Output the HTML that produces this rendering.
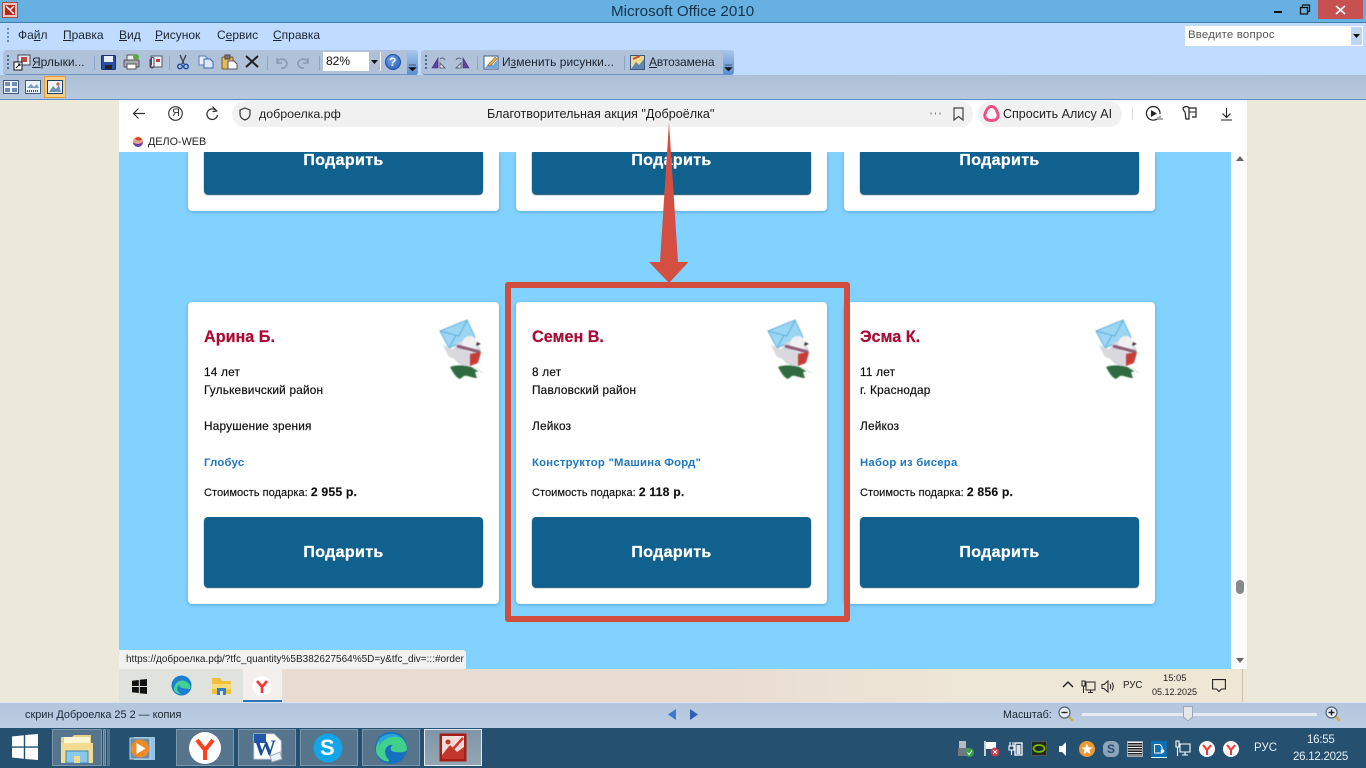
<!DOCTYPE html>
<html lang="ru"><head><meta charset="utf-8"><title>Microsoft Office 2010</title>
<style>
html,body{margin:0;padding:0;width:1366px;height:768px;overflow:hidden;background:#ece8da;font-family:"Liberation Sans",sans-serif;color:#111}
.a{position:absolute}
.t{position:absolute;white-space:nowrap;line-height:1}
svg{position:absolute;overflow:visible}
u{text-decoration-thickness:1px;text-underline-offset:1px}
.m{font-size:12px;top:29px;color:#1c2430}
.card{position:absolute;width:311px;background:#fff;border-radius:4px;box-shadow:0 1px 3px rgba(40,110,160,.45)}
.btn{position:absolute;left:16px;width:279px;background:#10618e;border-radius:4px;box-shadow:0 1px 1px #0b4a6e;color:#fff;font-weight:bold;font-size:16px;letter-spacing:.35px;text-align:center;-webkit-text-stroke:.3px #fff}
.nm{position:absolute;left:16px;top:27px;font-size:16.2px;font-weight:bold;color:#a80b33;white-space:nowrap;line-height:1;-webkit-text-stroke:.2px #a80b33}
.c{position:absolute;left:16px;font-size:11.8px;color:#111;white-space:nowrap;line-height:1;letter-spacing:.2px;-webkit-text-stroke:.2px #111}
.g{position:absolute;left:16px;top:156px;font-size:11.3px;font-weight:bold;color:#1e78bf;white-space:nowrap;line-height:1;letter-spacing:.25px}
.p{position:absolute;left:16px;top:184px;font-size:11.1px;color:#111;white-space:nowrap;line-height:1;-webkit-text-stroke:.15px #111}
.p b{font-size:12.2px;letter-spacing:.2px}
.bird{left:252px;top:17px;filter:blur(.45px)}
.tb{position:absolute;top:729px;height:37px;background:#56748c;border:1px solid #7d97aa;box-sizing:border-box}
</style></head><body>

<!-- title bar -->
<div class="a" style="left:0;top:0;width:1366px;height:22px;background:#66b1e1"></div>
<div class="a" style="left:0;top:22px;width:1366px;height:1px;background:#3f7ea9"></div>
<div class="a" style="left:2px;top:2px;width:16px;height:16px;background:#e9c6bd;border:1px solid #b24b3a;box-sizing:border-box"></div>
<div class="a" style="left:5px;top:5px;width:10px;height:10px;background:#b3271c"></div>
<svg style="left:5px;top:5px" width="10" height="10"><path d="M1 1L9 9M9 1L5 5" stroke="#fff" stroke-width="1.5" fill="none"/></svg>
<div class="t" style="left:611px;top:4px;font-size:15.2px;color:#17324a">Microsoft Office 2010</div>
<div class="a" style="left:1274px;top:11px;width:8px;height:2px;background:#111"></div>
<svg style="left:1299px;top:4px" width="12" height="11"><path d="M1.5 3.5H8.5V10H1.5ZM3.5 3V1H10.5V7.5H9" stroke="#111" stroke-width="1.3" fill="none"/></svg>
<div class="a" style="left:1318px;top:0;width:45px;height:19px;background:#c75150"></div>
<svg style="left:1335px;top:5px" width="11" height="10"><path d="M1 1L10 9M10 1L1 9" stroke="#fff" stroke-width="1.6" fill="none"/></svg>

<!-- menu band -->
<div class="a" style="left:0;top:23px;width:1366px;height:52px;background:#bfdbff"></div>
<div class="a" style="left:7px;top:28px;width:2px;height:15px;background-image:repeating-linear-gradient(#5f8fc5 0 2px,transparent 2px 4px)"></div>
<div class="t m" style="left:18px"><span>Фа<u>й</u>л</span></div>
<div class="t m" style="left:63px"><u>П</u>равка</div>
<div class="t m" style="left:119px"><u>В</u>ид</div>
<div class="t m" style="left:155px"><u>Р</u>исунок</div>
<div class="t m" style="left:217px">С<u>е</u>рвис</div>
<div class="t m" style="left:273px"><u>С</u>правка</div>
<div class="a" style="left:1185px;top:26px;width:178px;height:20px;background:#fff"></div>
<div class="t" style="left:1188px;top:30px;font-size:11.4px;color:#555;letter-spacing:.2px">Введите вопрос</div>
<div class="a" style="left:1351px;top:27px;width:11px;height:18px;background:#bdd6f6"></div>
<svg style="left:1353px;top:34px" width="7" height="4"><path d="M0 0H7L3.5 4Z" fill="#111"/></svg>

<!-- standard toolbar -->
<div class="a" style="left:3px;top:50px;width:414px;height:25px;background:#afc2da;border-radius:4px 0 0 4px;border-bottom:1px solid #6e94c4;box-sizing:border-box"></div>
<div class="a" style="left:407px;top:50px;width:11px;height:25px;background:linear-gradient(#a9c6ec,#5a8dd0);border-radius:0 3px 3px 0"></div>
<svg style="left:409px;top:65px" width="7" height="6"><path d="M0 0H7M0 2.5H7L3.5 6Z" fill="#111" stroke="#111" stroke-width=".6"/></svg>
<div class="a" style="left:421px;top:50px;width:303px;height:25px;background:#afc2da;border-radius:4px 0 0 4px;border-bottom:1px solid #6e94c4;box-sizing:border-box"></div>
<div class="a" style="left:723px;top:50px;width:11px;height:25px;background:linear-gradient(#a9c6ec,#5a8dd0);border-radius:0 3px 3px 0"></div>
<svg style="left:725px;top:65px" width="7" height="6"><path d="M0 0H7M0 2.5H7L3.5 6Z" fill="#111" stroke="#111" stroke-width=".6"/></svg>
<div class="a" style="left:7px;top:55px;width:2px;height:15px;background-image:repeating-linear-gradient(#3f6ea5 0 2px,transparent 2px 4px)"></div>
<div class="a" style="left:425px;top:55px;width:2px;height:15px;background-image:repeating-linear-gradient(#3f6ea5 0 2px,transparent 2px 4px)"></div>
<svg style="left:13px;top:54px" width="18" height="17"><rect x="5" y="1" width="12" height="10" fill="#e4ecf6" stroke="#445"/><rect x="8" y="3" width="6" height="5" fill="#c0473a"/><rect x="1" y="8" width="8" height="8" fill="#fff" stroke="#111"/><path d="M3 14L7 10M5 10H7V12" stroke="#111" fill="none"/></svg>
<div class="t" style="left:32px;top:56px;font-size:12px;color:#1c2430"><u>Я</u>рлыки...</div>
<div class="a" style="left:94px;top:56px;width:1px;height:14px;background:#8aa4c4"></div>
<svg style="left:101px;top:55px" width="15" height="15"><rect x=".5" y=".5" width="14" height="14" rx="1" fill="#2a4fa8" stroke="#1d2f66"/><rect x="3" y="1" width="9" height="6" fill="#e6eefb"/><rect x="4" y="10" width="7" height="4" fill="#222"/></svg>
<svg style="left:123px;top:54px" width="17" height="16"><rect x="4" y="1" width="9" height="5" fill="#eee" stroke="#555"/><rect x="1" y="6" width="15" height="7" rx="1" fill="#a5a8ad" stroke="#555"/><rect x="4" y="10" width="9" height="5" fill="#fff" stroke="#555"/><circle cx="13" cy="3" r="3" fill="#5aa648"/></svg>
<svg style="left:146px;top:54px" width="17" height="16"><rect x="5" y="2" width="11" height="11" fill="#eef2f8" stroke="#556"/><rect x="10" y="5" width="4" height="3" fill="#c23b3b"/><path d="M4 5V12A2 2 0 0 0 8 12V4A1.5 1.5 0 0 0 5.5 4V11" stroke="#445" fill="none"/></svg>
<div class="a" style="left:169px;top:56px;width:1px;height:14px;background:#8aa4c4"></div>
<svg style="left:176px;top:54px" width="14" height="16"><path d="M4 1L8 10M10 1L6 10" stroke="#445" stroke-width="1.4"/><circle cx="4" cy="12.5" r="2.3" fill="none" stroke="#1f4fa5" stroke-width="1.5"/><circle cx="10" cy="12.5" r="2.3" fill="none" stroke="#1f4fa5" stroke-width="1.5"/></svg>
<svg style="left:198px;top:55px" width="16" height="14"><path d="M1 1H7L9 3V10H1Z" fill="#e8eefa" stroke="#5a7fb8"/><path d="M6 4H12L15 7V13H6Z" fill="#dbe6f8" stroke="#3a68ab"/></svg>
<svg style="left:221px;top:54px" width="17" height="16"><rect x="1" y="3" width="11" height="12" rx="1" fill="#e3b95a" stroke="#7c5a1e"/><rect x="4" y="1" width="5" height="4" fill="#777" stroke="#444"/><path d="M7 7H13L16 10V15H7Z" fill="#fff" stroke="#556"/></svg>
<svg style="left:245px;top:55px" width="14" height="13"><path d="M1 1L13 12M13 1L1 12" stroke="#222" stroke-width="2"/></svg>
<div class="a" style="left:267px;top:56px;width:1px;height:14px;background:#8aa4c4"></div>
<svg style="left:274px;top:56px" width="14" height="13"><path d="M3 2V7H8M3 7A5 4.5 0 1 1 7 12" stroke="#8b9bb0" stroke-width="1.6" fill="none"/></svg>
<svg style="left:297px;top:56px" width="14" height="13"><path d="M11 2V7H6M11 7A5 4.5 0 1 0 7 12" stroke="#8b9bb0" stroke-width="1.6" fill="none"/></svg>
<div class="a" style="left:319px;top:56px;width:1px;height:14px;background:#8aa4c4"></div>
<div class="a" style="left:323px;top:52px;width:58px;height:19px;background:#fff"></div>
<div class="a" style="left:369px;top:52px;width:11px;height:19px;background:#aebfd6"></div>
<svg style="left:371px;top:60px" width="7" height="4"><path d="M0 0H7L3.5 4Z" fill="#111"/></svg>
<div class="t" style="left:326px;top:55px;font-size:12px;color:#111">82%</div>
<div class="a" style="left:385px;top:54px;width:16px;height:16px;border-radius:50%;background:radial-gradient(circle at 40% 35%,#6fa5ea,#2257b8);border:1px solid #1e4b9c;box-sizing:border-box"></div>
<div class="t" style="left:389px;top:56px;font-size:12px;font-weight:bold;color:#fff">?</div>
<svg style="left:431px;top:55px" width="16" height="14"><path d="M1 13L7 3V13Z" fill="#6a3fa0" stroke="#3f2a70" stroke-width=".6"/><path d="M9 13V8L14 13Z" fill="#e6ecf6" stroke="#667"/><path d="M9 4A3 3 0 0 1 14 5" stroke="#667" fill="none"/></svg>
<svg style="left:454px;top:55px" width="16" height="14"><path d="M15 13L9 3V13Z" fill="#6a3fa0" stroke="#3f2a70" stroke-width=".6"/><path d="M7 13V8L2 13Z" fill="#e6ecf6" stroke="#667"/><path d="M7 4A3 3 0 0 0 2 5" stroke="#667" fill="none"/></svg>
<div class="a" style="left:477px;top:56px;width:1px;height:14px;background:#8aa4c4"></div>
<svg style="left:483px;top:54px" width="16" height="16"><rect x="1" y="2" width="14" height="13" fill="#fff" stroke="#3a5a85"/><path d="M2 14L7 8L10 11L14 6V14Z" fill="#6ba7d8"/><path d="M5 11L12 3L14 5L7 12Z" fill="#e3a838" stroke="#7a5a1e" stroke-width=".5"/></svg>
<div class="t" style="left:502px;top:56px;font-size:12px;color:#1c2430;letter-spacing:.03px">И<u>з</u>менить рисунки...</div>
<div class="a" style="left:624px;top:56px;width:1px;height:14px;background:#8aa4c4"></div>
<svg style="left:630px;top:54px" width="15" height="16"><rect x=".5" y="1.5" width="14" height="14" fill="#f1d98a" stroke="#3a5a85"/><path d="M1 15L6 8L9 11L14 5V15Z" fill="#5f86ad"/><path d="M3 5L10 2" stroke="#c9493a" stroke-width="2"/></svg>
<div class="t" style="left:649px;top:56px;font-size:12px;color:#1c2430;letter-spacing:-.1px"><u>А</u>втозамена</div>

<!-- view bar -->
<div class="a" style="left:0;top:75px;width:1366px;height:24px;background:linear-gradient(#acbfd6,#b8c9de)"></div>
<div class="a" style="left:0;top:99px;width:1366px;height:1px;background:#5f8fc8"></div>
<svg style="left:3px;top:80px" width="16" height="14"><rect x=".5" y=".5" width="15" height="13" fill="#eef3fa" stroke="#3d5a80"/><path d="M2 2H7V6H2ZM9 2H14V6H9ZM2 8H7V12H2ZM9 8H14V12H9Z" fill="#6e8db5"/></svg>
<svg style="left:25px;top:80px" width="16" height="14"><rect x=".5" y=".5" width="15" height="13" fill="#eef3fa" stroke="#3d5a80"/><path d="M2 8L6 4L9 7L12 4L14 8Z" fill="#7e9cc0"/><path d="M2 11H14" stroke="#443a99" stroke-dasharray="1 1" stroke-width="2"/></svg>
<div class="a" style="left:44px;top:76px;width:22px;height:22px;background:#f6cf84;border:1px solid #e59b37;box-sizing:border-box"></div>
<svg style="left:47px;top:80px" width="16" height="14"><rect x=".5" y=".5" width="15" height="13" fill="#eef3fa" stroke="#1e3d66"/><path d="M2 12L6 6L9 9L12 5L14 12Z" fill="#6d93ba"/><circle cx="11" cy="4" r="1.6" fill="#d2583c"/></svg>

<!-- browser page -->
<div class="a" style="left:119px;top:152px;width:1112px;height:517px;background:#82d2ff"></div>
<div class="a" style="left:1231px;top:152px;width:16px;height:517px;background:#fdfcfd"></div>
<svg style="left:1236px;top:156px" width="8" height="5"><path d="M0 5H8L4 0Z" fill="#666"/></svg>
<svg style="left:1236px;top:658px" width="8" height="5"><path d="M0 0H8L4 5Z" fill="#666"/></svg>
<div class="a" style="left:1236px;top:580px;width:8px;height:14px;border-radius:4px;background:#85888c"></div>

<!-- top cards -->
<div class="card" style="left:188px;top:152px;height:59px;border-radius:0 0 4px 4px"><div class="btn" style="top:0;height:42px;line-height:17px;border-radius:0 0 4px 4px">Подарить</div></div>
<div class="card" style="left:516px;top:152px;height:59px;border-radius:0 0 4px 4px"><div class="btn" style="top:0;height:42px;line-height:17px;border-radius:0 0 4px 4px">Подарить</div></div>
<div class="card" style="left:844px;top:152px;height:59px;border-radius:0 0 4px 4px"><div class="btn" style="top:0;height:42px;line-height:17px;border-radius:0 0 4px 4px">Подарить</div></div>

<!-- cards -->
<div class="card" style="left:188px;top:302px;height:302px">
 <div class="nm">Арина Б.</div><div class="c" style="top:65px">14 лет</div><div class="c" style="top:83px">Гулькевичский район</div><div class="c" style="top:119px">Нарушение зрения</div>
 <div class="g">Глобус</div><div class="p">Стоимость подарка: <b>2 955 р.</b></div>
 <svg class="bird" width="44" height="60" viewBox="0 0 44 60"><path d="M10 48C18 45 30 46 41 52L35 53L37 59C31 59 28 56 24 57L20 60C15 58 13 53 10 48Z" fill="#2f6a41"/><path d="M33 48L43 54" stroke="#e5efe6" stroke-width="2"/><path d="M0 12L27 1L35 18L9 29Z" fill="#9bd6f2" stroke="#66b3e0"/><path d="M0 12L19 17L27 1M9 29L16 16" fill="none" stroke="#62aedd"/><path d="M3 26L15 31L20 42L9 38Z" fill="#dadade"/><ellipse cx="27" cy="34" rx="14" ry="13" fill="#d8d8de"/><circle cx="30" cy="25" r="8" fill="#f0f0f2"/><path d="M37 23L41 25L36 27Z" fill="#333"/><path d="M17 27L40 33" stroke="#8f5d78" stroke-width="3"/><path d="M30 35L41 33L38 44L30 47Z" fill="#c83d38"/></svg>
 <div class="btn" style="top:215px;height:70px;line-height:72px">Подарить</div>
</div>
<div class="card" style="left:516px;top:302px;height:302px">
 <div class="nm">Семен В.</div><div class="c" style="top:65px">8 лет</div><div class="c" style="top:83px">Павловский район</div><div class="c" style="top:119px">Лейкоз</div>
 <div class="g">Конструктор "Машина Форд"</div><div class="p">Стоимость подарка: <b>2 118 р.</b></div>
 <svg class="bird" width="44" height="60" viewBox="0 0 44 60"><path d="M10 48C18 45 30 46 41 52L35 53L37 59C31 59 28 56 24 57L20 60C15 58 13 53 10 48Z" fill="#2f6a41"/><path d="M33 48L43 54" stroke="#e5efe6" stroke-width="2"/><path d="M0 12L27 1L35 18L9 29Z" fill="#9bd6f2" stroke="#66b3e0"/><path d="M0 12L19 17L27 1M9 29L16 16" fill="none" stroke="#62aedd"/><path d="M3 26L15 31L20 42L9 38Z" fill="#dadade"/><ellipse cx="27" cy="34" rx="14" ry="13" fill="#d8d8de"/><circle cx="30" cy="25" r="8" fill="#f0f0f2"/><path d="M37 23L41 25L36 27Z" fill="#333"/><path d="M17 27L40 33" stroke="#8f5d78" stroke-width="3"/><path d="M30 35L41 33L38 44L30 47Z" fill="#c83d38"/></svg>
 <div class="btn" style="top:215px;height:70px;line-height:72px">Подарить</div>
</div>
<div class="card" style="left:844px;top:302px;height:302px">
 <div class="nm">Эсма К.</div><div class="c" style="top:65px">11 лет</div><div class="c" style="top:83px">г. Краснодар</div><div class="c" style="top:119px">Лейкоз</div>
 <div class="g">Набор из бисера</div><div class="p">Стоимость подарка: <b>2 856 р.</b></div>
 <svg class="bird" width="44" height="60" viewBox="0 0 44 60"><path d="M10 48C18 45 30 46 41 52L35 53L37 59C31 59 28 56 24 57L20 60C15 58 13 53 10 48Z" fill="#2f6a41"/><path d="M33 48L43 54" stroke="#e5efe6" stroke-width="2"/><path d="M0 12L27 1L35 18L9 29Z" fill="#9bd6f2" stroke="#66b3e0"/><path d="M0 12L19 17L27 1M9 29L16 16" fill="none" stroke="#62aedd"/><path d="M3 26L15 31L20 42L9 38Z" fill="#dadade"/><ellipse cx="27" cy="34" rx="14" ry="13" fill="#d8d8de"/><circle cx="30" cy="25" r="8" fill="#f0f0f2"/><path d="M37 23L41 25L36 27Z" fill="#333"/><path d="M17 27L40 33" stroke="#8f5d78" stroke-width="3"/><path d="M30 35L41 33L38 44L30 47Z" fill="#c83d38"/></svg>
 <div class="btn" style="top:215px;height:70px;line-height:72px">Подарить</div>
</div>

<!-- browser chrome -->
<div class="a" style="left:119px;top:100px;width:1128px;height:52px;background:#fff"></div>
<div class="a" style="left:232px;top:101px;width:741px;height:26px;background:#f1f1f1;border-radius:13px"></div>
<div class="a" style="left:978px;top:101px;width:144px;height:26px;background:#f1f1f1;border-radius:13px"></div>
<svg style="left:132px;top:107px" width="14" height="13"><path d="M13 6.5H1.5M6.5 1.5L1.5 6.5L6.5 11.5" stroke="#333" stroke-width="1.2" fill="none"/></svg>
<svg style="left:168px;top:106px" width="15" height="15"><circle cx="7.5" cy="7.5" r="6.8" stroke="#333" stroke-width="1.1" fill="none"/></svg>
<div class="t" style="left:172px;top:108px;font-size:11px;color:#333">Я</div>
<svg style="left:205px;top:106px" width="14" height="15"><path d="M11.5 5A5.3 5.3 0 1 0 12.5 9" stroke="#333" stroke-width="1.3" fill="none"/><path d="M7.5 0.5L11.8 5L7.5 5.6" stroke="#333" stroke-width="1.2" fill="none"/></svg>
<svg style="left:239px;top:107px" width="12" height="14"><path d="M6 1L11 3V7C11 10 9 12 6 13C3 12 1 10 1 7V3Z" stroke="#333" stroke-width="1.2" fill="none"/></svg>
<div class="t" style="left:259px;top:108px;font-size:12.4px;color:#222">доброелка.рф</div>
<div class="t" style="left:487px;top:108px;font-size:12.6px;color:#222">Благотворительная акция "Доброёлка"</div>
<svg style="left:929px;top:112px" width="13" height="3"><path d="M1.5 1.5H2.5M6 1.5H7M10.5 1.5H11.5" stroke="#777" stroke-width="2"/></svg>
<svg style="left:953px;top:107px" width="11" height="14"><path d="M1 1H10V13L5.5 9.5L1 13Z" stroke="#444" stroke-width="1.2" fill="none"/></svg>
<svg style="left:983px;top:105px" width="17" height="17"><path d="M8.5 1.5C12 1.5 13.500 5 15 9C16 13 13 15.5 8.5 15.5C4 15.5 1 13 2 9C3.5 5 5 1.5 8.5 1.5Z" fill="#fff" stroke="#ee4f86" stroke-width="3"/></svg>
<div class="t" style="left:1003px;top:108px;font-size:12.5px;color:#222">Спросить Алису AI</div>
<div class="a" style="left:1132px;top:107px;width:1px;height:13px;background:#ddd"></div>
<svg style="left:1145px;top:105px" width="18" height="17"><path d="M12 14A6.8 6.8 0 1 1 15 9" stroke="#222" stroke-width="1.2" fill="none"/><path d="M6 5L12 8.5L6 12Z" fill="#222"/><path d="M13 12V15M15 10.5V15M17 13V15" stroke="#555"/></svg>
<svg style="left:1182px;top:105px" width="16" height="16"><path d="M1 3C3 1 6 1 7 3V14H4L3 7C2 6 1 5 1 3Z M7 3H14V12H10" stroke="#222" stroke-width="1.2" fill="none"/><path d="M7 7H14" stroke="#222"/></svg>
<svg style="left:1220px;top:107px" width="13" height="14"><path d="M6.5 1V10M2.5 6.5L6.5 10.5L10.5 6.5M1 13H12" stroke="#222" stroke-width="1.1" fill="none"/></svg>
<svg style="left:132px;top:135px" width="12" height="13"><circle cx="6" cy="6.5" r="5" fill="#e8a48f"/><path d="M1 7A5 5 0 0 0 11 7L8 8.5C6 9.5 3 9 1 7Z" fill="#6a3ea0"/><path d="M3 4C5 1 9 2 10 5L6 5.5Z" fill="#d3431f"/></svg>
<div class="t" style="left:148px;top:137px;font-size:10.8px;color:#222">ДЕЛО-WEB</div>

<!-- annotation -->
<svg style="left:0;top:0" width="1366" height="768"><path d="M669 122L678 262H688.5L669 283L649 262H660Z" fill="#d44f41"/></svg>
<div class="a" style="left:505px;top:282px;width:345px;height:340px;box-sizing:border-box;border:6px solid #d04d3f;border-radius:3px"></div>

<!-- status url + inner taskbar -->
<div class="a" style="left:119px;top:669px;width:1128px;height:34px;background:linear-gradient(90deg,#e8dbd2 0,#e8dbd2 50%,#eee6d6 75%,#efe6d6 100%)"></div>
<div class="a" style="left:119px;top:669px;width:124px;height:33px;background:#e0e2de"></div>
<div class="a" style="left:243px;top:669px;width:39px;height:33px;background:#f2efec"></div>
<div class="a" style="left:243px;top:700px;width:39px;height:2px;background:#2c73b8"></div>
<div class="a" style="left:119px;top:650px;width:347px;height:19px;background:#f1f1f1;border-radius:0 3px 0 0"></div>
<div class="t" style="left:126px;top:655px;font-size:10px;color:#222">https://доброелка.рф/?tfc_quantity%5B382627564%5D=y&amp;tfc_div=:::#order</div>
<svg style="left:132px;top:679px" width="15" height="15"><path d="M0 1.8L6.8 1V7H0ZM7.8 .8L15 0V7H7.8ZM0 8H6.8V14L0 13.2ZM7.8 8H15V15L7.8 14.2Z" fill="#111"/></svg>
<svg style="left:171px;top:675px" width="21" height="21"><circle cx="10.5" cy="10.5" r="10" fill="#1b7fd0"/><path d="M3 14C3 8 9 4 14 6C19 8 20 12 19 14C16 14 7 13 9 10C5 11 5 16 10 19C6 19 3 17 3 14Z" fill="#45d196"/></svg>
<svg style="left:212px;top:678px" width="19" height="17"><path d="M0 0H8L10 3H19V16H0Z" fill="#f0c23c"/><rect x="0" y="6" width="19" height="5" fill="#f7db76"/><rect x="5" y="10" width="9" height="7" fill="#2f80c8"/><rect x="8" y="13" width="3" height="4" fill="#e0e2de"/></svg>
<svg style="left:252px;top:676px" width="20" height="20"><circle cx="10" cy="10" r="9.8" fill="#fff"/><path d="M5 5L10 11L15 5M10 11V17" stroke="#f33" stroke-width="2.6" fill="none"/></svg>
<svg style="left:1062px;top:680px" width="12" height="8"><path d="M1 7L6 2L11 7" stroke="#111" stroke-width="1.3" fill="none"/></svg>
<svg style="left:1081px;top:680px" width="15" height="14"><path d="M5 2H14V10H5ZM1 1H4V6H1ZM2.5 6V13M7 12.5H12M9.5 10V12.5" stroke="#222" fill="none"/></svg>
<svg style="left:1101px;top:680px" width="14" height="13"><path d="M1 4.5H3L7 1V12L3 8.5H1Z" stroke="#222" fill="none"/><path d="M9 4Q10.5 6.5 9 9M11 2.5Q13.5 6.5 11 10.5" stroke="#222" fill="none"/></svg>
<div class="t" style="left:1123px;top:681px;font-size:9.7px;color:#222">РУС</div>
<div class="t" style="left:1163px;top:673px;font-size:9.4px;color:#222">15:05</div>
<div class="t" style="left:1152px;top:688px;font-size:9px;color:#222">05.12.2025</div>
<svg style="left:1212px;top:679px" width="14" height="13"><path d="M.6.6H13.4V10H9.5L7 12.5L4.5 10H.6Z" stroke="#222" stroke-width="1.1" fill="none"/></svg>
<div class="a" style="left:1242px;top:669px;width:1px;height:33px;background:#c9c4b5"></div>

<!-- status bar -->
<div class="a" style="left:0;top:702px;width:1366px;height:26px;background:linear-gradient(#b4c6dd,#bccde3);border-top:1px solid #dbe5f1;box-sizing:border-box"></div>
<div class="t" style="left:25px;top:710px;font-size:10.9px;color:#1d2733">скрин Доброелка 25 2 — копия</div>
<svg style="left:668px;top:709px" width="8" height="11"><path d="M8 0V11L0 5.5Z" fill="#3b7ad0"/></svg>
<svg style="left:690px;top:709px" width="8" height="11"><path d="M0 0V11L8 5.5Z" fill="#2f5fb5"/></svg>
<div class="t" style="left:1003px;top:710px;font-size:10.7px;color:#1d2733">Масштаб:</div>
<svg style="left:1058px;top:706px" width="16" height="16"><path d="M10 10L15 15" stroke="#c9b24a" stroke-width="2.5"/><circle cx="6.5" cy="6.5" r="5.5" fill="#e8eef6" stroke="#51617a" stroke-width="1.2"/><path d="M3.5 6.5H9.5" stroke="#222" stroke-width="1.4"/></svg>
<div class="a" style="left:1082px;top:713px;width:235px;height:3px;background:#e6ebf2"></div>
<svg style="left:1183px;top:706px" width="10" height="16"><path d="M.5.5H9.5V11L5 15L.5 11Z" fill="#e4e7ec" stroke="#9aa5b5"/></svg>
<svg style="left:1325px;top:706px" width="16" height="16"><path d="M10 10L15 15" stroke="#c9b24a" stroke-width="2.5"/><circle cx="6.5" cy="6.5" r="5.5" fill="#e8eef6" stroke="#51617a" stroke-width="1.2"/><path d="M3.5 6.5H9.5M6.5 3.5V9.5" stroke="#222" stroke-width="1.4"/></svg>

<!-- windows taskbar -->
<div class="a" style="left:0;top:728px;width:1366px;height:40px;background:#26506f"></div>
<svg style="left:12px;top:734px" width="26" height="26"><path d="M0 2.5L11.8 1.2V12.4H0ZM13.2 1L26 0V12.4H13.2ZM0 13.8H11.8V24.8L0 23.5ZM13.2 13.8H26V26L13.2 25Z" fill="#fff"/></svg>
<div class="tb" style="left:52px;width:50px"></div>
<svg style="left:61px;top:734px" width="32" height="29"><path d="M0 3H11L13 1H30V26H0Z" fill="#e9cf87"/><rect x="3" y="3" width="26" height="6" fill="#fff6d4"/><rect x="0" y="9" width="32" height="20" fill="#f3dc91"/><rect x="5" y="17" width="22" height="12" fill="#8bc9e8" stroke="#3d88b8"/><rect x="13" y="22" width="6" height="7" fill="#f3dc91"/></svg>
<div class="a" style="left:103px;top:729px;width:3px;height:37px;background:#56748c;border:1px solid #7d97aa;box-sizing:border-box"></div>
<div class="a" style="left:107px;top:729px;width:3px;height:37px;background:#56748c"></div>
<svg style="left:128px;top:736px" width="28" height="25"><rect x="6" y="1" width="21" height="23" fill="#90c4e8"/><rect x="2" y="2" width="20" height="21" fill="#6d8fae" stroke="#bcd6e8"/><circle cx="12" cy="12.5" r="9" fill="#f08a24"/><path d="M8.5 7L17.5 12.5L8.5 18Z" fill="#fff"/></svg>
<div class="tb" style="left:176px;width:58px"></div>
<svg style="left:189px;top:732px" width="32" height="32"><circle cx="16" cy="16" r="16" fill="#fff"/><path d="M8 8L16 18L24 8M16 18V28" stroke="#fc3f1d" stroke-width="4" fill="none"/></svg>
<div class="tb" style="left:238px;width:58px"></div>
<svg style="left:252px;top:733px" width="30" height="30"><path d="M2 1H22L29 8V26H2Z" fill="#fff" stroke="#c8d5e5"/><rect x="2" y="1" width="12" height="9" fill="#2258aa"/><path d="M18 23L28 19L30 26L20 29Z" fill="#e8eef5" stroke="#9ab"/></svg>
<div class="t" style="left:254px;top:737px;font-size:22px;font-weight:bold;color:#1c4fa0;font-family:'Liberation Serif',serif">W</div>
<div class="tb" style="left:300px;width:58px"></div>
<svg style="left:313px;top:733px" width="30" height="30"><circle cx="15" cy="15" r="14.5" fill="#12a5e8"/></svg>
<div class="t" style="left:320px;top:737px;font-size:22px;font-weight:bold;color:#fff">S</div>
<div class="tb" style="left:362px;width:58px"></div>
<svg style="left:375px;top:732px" width="32" height="32"><circle cx="16" cy="16" r="16" fill="#1770bf"/><path d="M1 18C1 8 9 1 18 2C27 3 32 11 32 17C32 20 26 21 20 20C14 19 15 15 18 13C11 12 7 20 13 27C17 31 9 30 5 26C2 23 1 21 1 18Z" fill="#41cf8c"/><path d="M4 7C8 2 20-1 27 6C20 3 9 5 4 14Z" fill="#25a5d8"/></svg>
<div class="tb" style="left:424px;width:58px;background:linear-gradient(#7f95a7,#94a6b3);border:1px solid #e0e8ee"></div>
<svg style="left:439px;top:733px" width="28" height="29"><rect x=".5" y=".5" width="27" height="28" fill="#a61e17"/><rect x="3" y="3" width="22" height="23" fill="#f3dcd5"/><path d="M3 22L11 12L18 19L25 14V26H3Z" fill="#c2352a"/><circle cx="9" cy="9" r="2.5" fill="#c2352a"/><path d="M14 16L24 5" stroke="#d5352b" stroke-width="2.5"/></svg>

<!-- tray -->
<svg style="left:958px;top:740px" width="17" height="18"><rect x="1" y="1" width="7" height="8" fill="#b6bcc4"/><rect x="0" y="8" width="11" height="8" fill="#6f7780"/><circle cx="11.5" cy="12.5" r="4.5" fill="#3aa34a"/><path d="M9.5 12.5L11 14.5L14 10.5" stroke="#fff" fill="none"/></svg>
<svg style="left:984px;top:740px" width="16" height="17"><path d="M1 1V16" stroke="#fff" stroke-width="1.5"/><path d="M2 2H12V9H2Z" fill="#fff"/><circle cx="11" cy="12" r="4.5" fill="#c9384a"/><path d="M9 10L13 14M13 10L9 14" stroke="#fff"/></svg>
<svg style="left:1008px;top:741px" width="15" height="15"><rect x="7" y="2" width="7" height="12" fill="none" stroke="#fff" stroke-width="1.3"/><rect x="8.5" y="4" width="4" height="9" fill="#ddd"/><path d="M2 1V5M5 1V5M1 5H6V9H1ZM3.5 9V14" stroke="#fff" fill="none" stroke-width="1.1"/></svg>
<div class="a" style="left:1031px;top:741px;width:16px;height:15px;background:#1e2a1e;border:1px solid #555;box-sizing:border-box"></div>
<svg style="left:1033px;top:744px" width="12" height="9"><ellipse cx="6" cy="4.5" rx="5.5" ry="3.5" fill="none" stroke="#76b900" stroke-width="1.8"/></svg>
<svg style="left:1059px;top:742px" width="8" height="14"><path d="M7 0V14L3 10H0V4H3Z" fill="#fff"/></svg>
<svg style="left:1079px;top:741px" width="16" height="16"><circle cx="8" cy="8" r="8" fill="#ef9a33"/><path d="M8 2.5L9.6 6.2L13.5 6.5L10.5 9L11.5 13L8 11L4.5 13L5.5 9L2.5 6.5L6.4 6.2Z" fill="#fff"/></svg>
<svg style="left:1103px;top:741px" width="16" height="16"><rect width="16" height="16" rx="6" fill="#8ba4b9"/></svg>
<div class="t" style="left:1107px;top:743px;font-size:12px;font-weight:bold;color:#26506f">S</div>
<div class="a" style="left:1127px;top:741px;width:16px;height:16px;background:repeating-linear-gradient(#eee 0 1px,#222 1px 2.5px);border:1px solid #9ab;box-sizing:border-box"></div>
<div class="a" style="left:1151px;top:741px;width:16px;height:16px;background:#0f6fb5;border-bottom:1px solid #cfe"></div>
<svg style="left:1154px;top:744px" width="11" height="10"><path d="M.5.5H6L8 3V9H.5Z" fill="none" stroke="#fff"/><circle cx="8.5" cy="7" r="1.8" fill="#fff"/></svg>
<svg style="left:1175px;top:740px" width="16" height="17"><path d="M5 4H15V12H5ZM1 1H4V7H1ZM2.5 7V16M7 15H13M10 12V15" stroke="#fff" stroke-width="1.1" fill="none"/></svg>
<svg style="left:1199px;top:741px" width="16" height="16"><circle cx="8" cy="8" r="8" fill="#fff"/><path d="M4 4L8 9L12 4M8 9V14" stroke="#f33" stroke-width="2" fill="none"/></svg>
<svg style="left:1223px;top:741px" width="16" height="16"><circle cx="8" cy="8" r="8" fill="#fff"/><path d="M4 4L8 9L12 4M8 9V14" stroke="#f33" stroke-width="2" fill="none"/></svg>
<div class="t" style="left:1254px;top:743px;font-size:11.5px;color:#e8eef3">РУС</div>
<div class="t" style="left:1307px;top:735px;font-size:11.5px;letter-spacing:-.25px;color:#e8eef3">16:55</div>
<div class="t" style="left:1293px;top:752px;font-size:11.5px;letter-spacing:-.25px;color:#e8eef3">26.12.2025</div>
</body></html>
